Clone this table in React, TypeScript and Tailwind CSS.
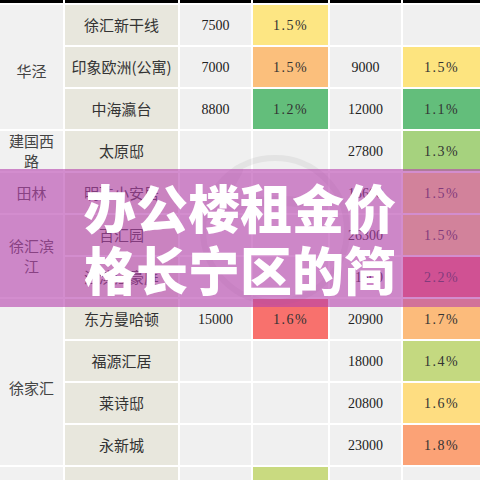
import React from "react";

type Row = {
  area?: { label: string; span: number };
  name: string;
  rent1: string;
  rate1?: { text: string; color: string };
  rent2: string;
  rate2?: { text: string; color: string };
};

const rows: Row[] = [
  { area: { label: "华泾", span: 3 }, name: "徐汇新干线", rent1: "7500", rate1: { text: "1.5%", color: "bg-[#fde683]" }, rent2: "" },
  { name: "印象欧洲(公寓)", rent1: "7000", rate1: { text: "1.5%", color: "bg-[#fbbf7c]" }, rent2: "9000", rate2: { text: "1.5%", color: "bg-[#fde47f]" } },
  { name: "中海瀛台", rent1: "8800", rate1: { text: "1.2%", color: "bg-[#63be7b]" }, rent2: "12000", rate2: { text: "1.1%", color: "bg-[#63be7b]" } },
  { area: { label: "建国西路", span: 1 }, name: "太原邸", rent1: "", rent2: "27800", rate2: { text: "1.3%", color: "bg-[#a6d27e]" } },
  { area: { label: "田林", span: 1 }, name: "明珠小安居", rent1: "", rent2: "15600", rate2: { text: "1.5%", color: "bg-[#fde47f]" } },
  { area: { label: "徐汇滨江", span: 2 }, name: "百汇园", rent1: "", rent2: "26300", rate2: { text: "1.5%", color: "bg-[#fde47f]" } },
  { name: "汇滨江豪庭", rent1: "", rent2: "31500", rate2: { text: "2.2%", color: "bg-[#f8696b]" } },
  { area: { label: "徐家汇", span: 4 }, name: "东方曼哈顿", rent1: "15000", rate1: { text: "1.6%", color: "bg-[#f8716d]" }, rent2: "20900", rate2: { text: "1.7%", color: "bg-[#fcbb7b]" } },
  { name: "福源汇居", rent1: "", rent2: "18000", rate2: { text: "1.4%", color: "bg-[#c4d980]" } },
  { name: "莱诗邸", rent1: "", rent2: "20800", rate2: { text: "1.6%", color: "bg-[#fedd81]" } },
  { name: "永新城", rent1: "", rent2: "23000", rate2: { text: "1.8%", color: "bg-[#fba276]" } },
  { area: { label: "", span: 1 }, name: "", rent1: "", rate1: { text: "", color: "bg-[#c9da80]" }, rent2: "" },
];

const spanClass: Record<number, string> = {
  1: "row-span-1",
  2: "row-span-2",
  3: "row-span-3",
  4: "row-span-4",
};

const cjk = "font-['Noto_Sans_CJK_SC',sans-serif]";
const serif = "font-['Liberation_Serif','Noto_Sans_CJK_SC',serif]";

function Rate({ rate }: { rate?: { text: string; color: string } }) {
  return (
    <div className={`flex items-center justify-center text-[14px] tracking-[1.5px] text-[#333] ${serif} ${rate ? rate.color : "bg-[#f0f0f0]"}`}>
      {rate?.text}
    </div>
  );
}

export default function App() {
  return (
    <div className="relative h-[480px] w-[480px] overflow-hidden bg-white">
      <div className="grid grid-cols-[63px_113px_71px_75px_71px_1fr] grid-rows-[3px] auto-rows-[40px] gap-[2px]">
        {[0, 1, 2, 3, 4, 5].map((i) => (
          <div key={i} className="bg-black" />
        ))}

        {rows.map((r, i) => (
          <React.Fragment key={i}>
            {r.area && (
              <div
                className={`flex items-center justify-center bg-[#f1f1f1] px-1 text-center text-[15px] leading-[20px] text-[#444] ${cjk} ${spanClass[r.area.span]} ${r.area.span === 3 ? "pt-2" : ""} ${r.area.span === 4 ? "pt-3" : ""}`}
              >
                {r.area.label}
              </div>
            )}
            <div className={`flex items-center justify-center whitespace-nowrap bg-[#e8e7dd] text-[15px] text-[#333] ${cjk}`}>
              {r.name}
            </div>
            <div className={`flex items-center justify-center bg-[#f0f0f0] text-[14px] text-[#222] ${serif}`}>
              {r.rent1}
            </div>
            <Rate rate={r.rate1} />
            <div className={`flex items-center justify-center bg-[#f0f0f0] text-[14px] text-[#222] ${serif}`}>
              {r.rent2}
            </div>
            <Rate rate={r.rate2} />
          </React.Fragment>
        ))}
      </div>

      {/* faint watermark behind the banner */}
      <svg className="absolute left-[190px] top-[140px] h-[170px] w-[170px] opacity-10" viewBox="0 0 170 170" fill="none">
        <circle cx="85" cy="90" r="72" stroke="#777" strokeWidth="6" />
        <path d="M48 30 L25 72 Q60 58 110 62" stroke="#777" strokeWidth="10" strokeLinecap="round" />
      </svg>

      <div className="absolute left-0 right-0 top-[169px] flex h-[138px] flex-col items-center justify-center bg-[#b641ad]/60">
        <div className={`text-[52px] font-black leading-[62px] text-white ${cjk}`}>办公楼租金价</div>
        <div className={`text-[52px] font-black leading-[62px] text-white ${cjk}`}>格长宁区的简</div>
      </div>
    </div>
  );
}
